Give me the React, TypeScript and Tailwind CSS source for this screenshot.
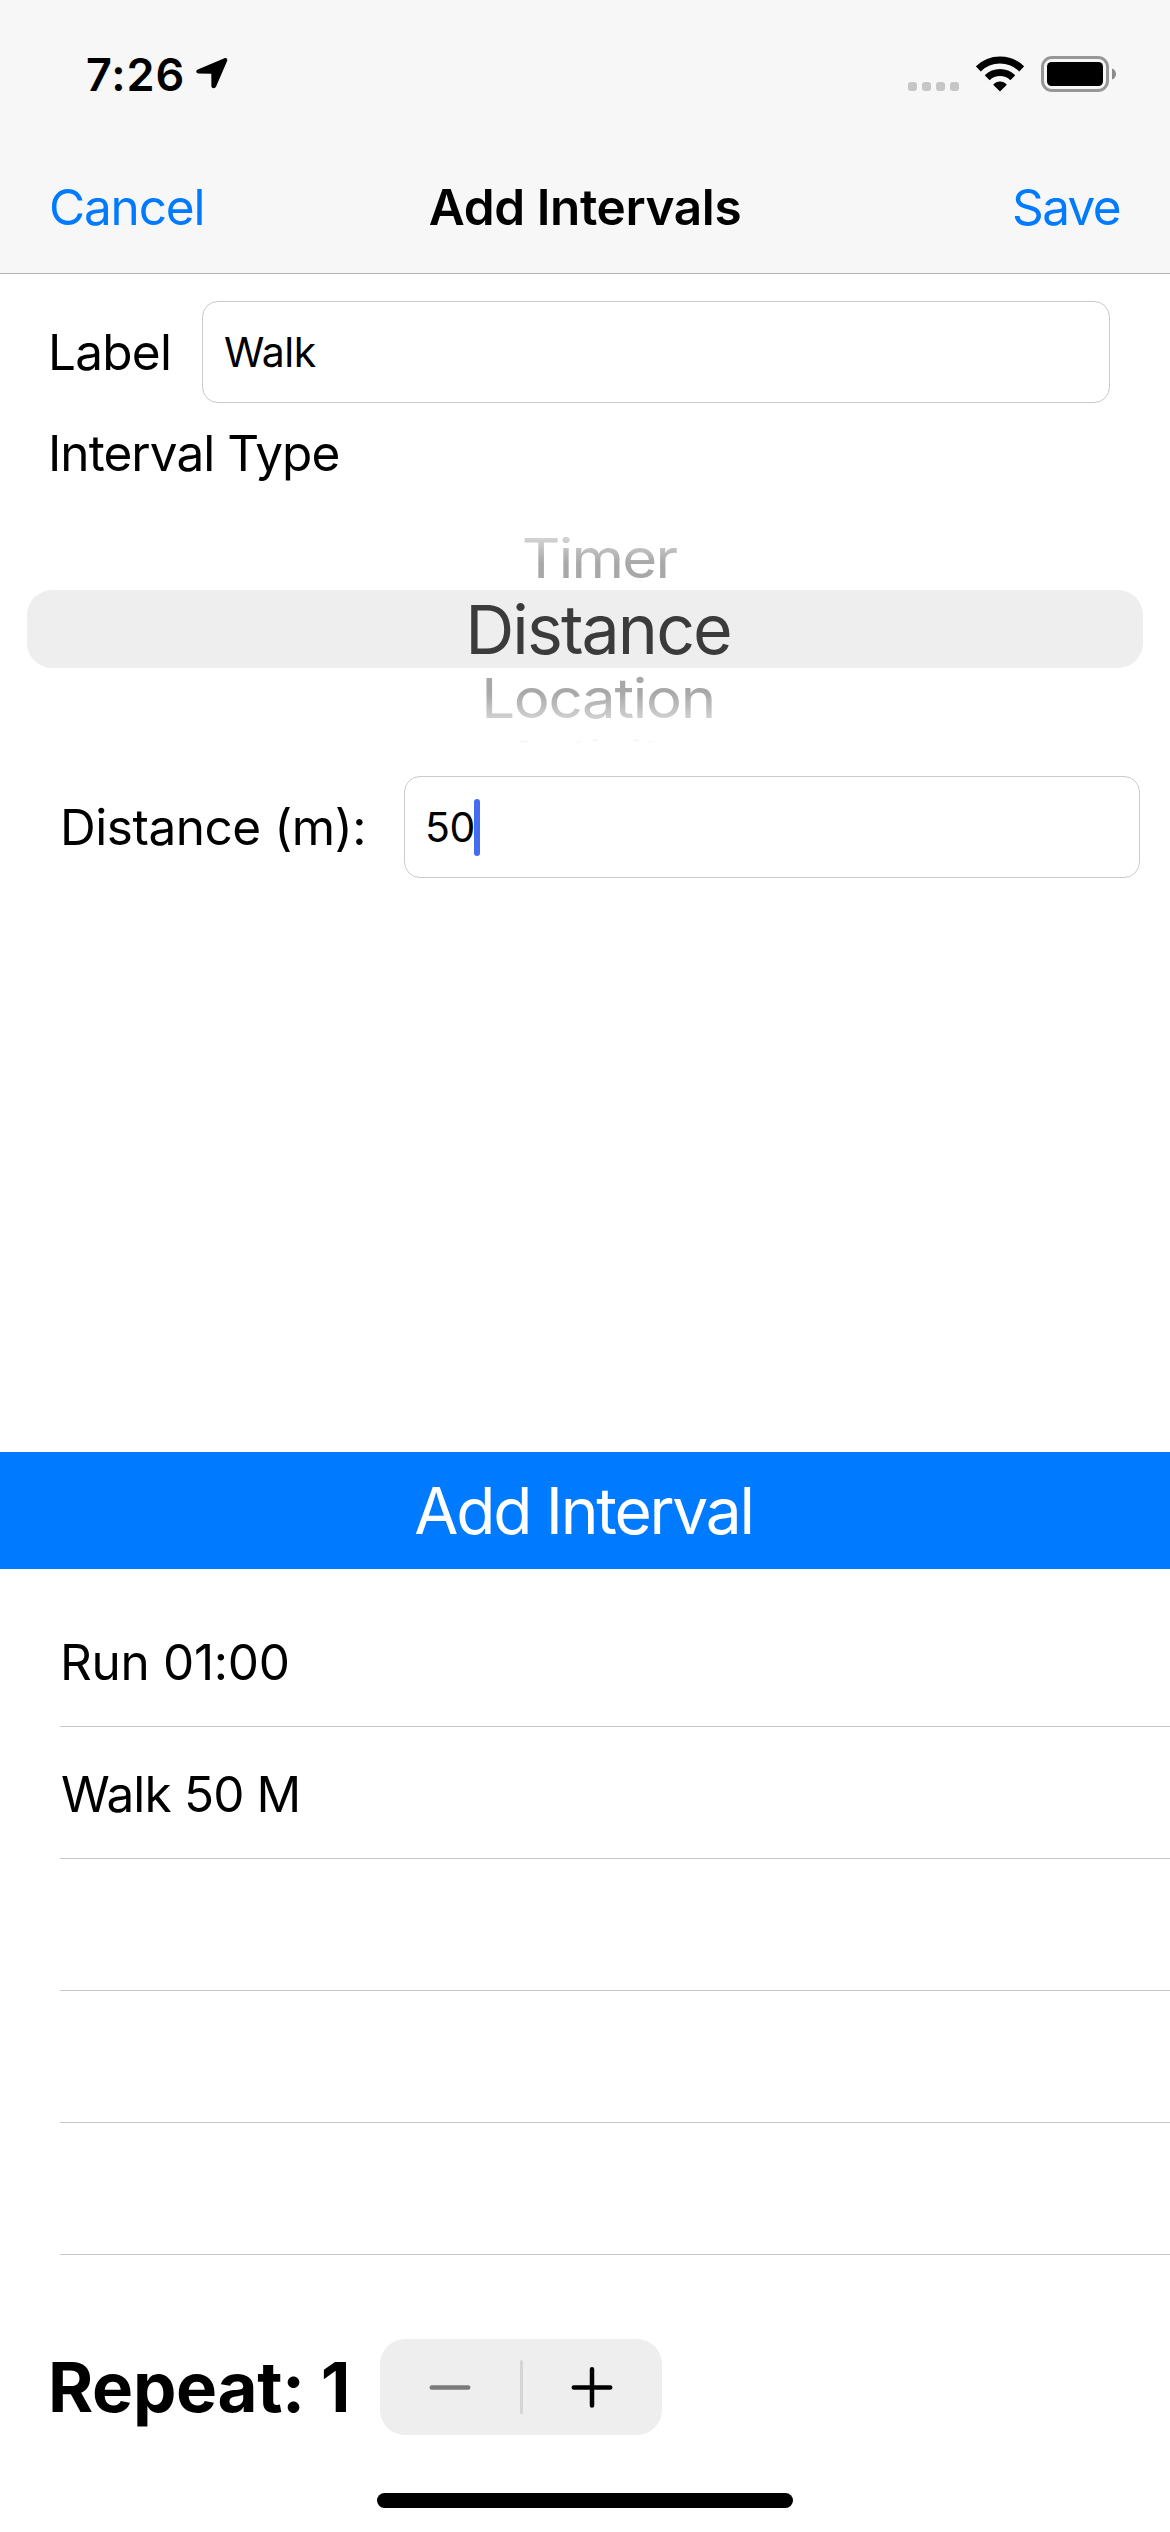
import type { ReactNode } from "react";

function LocationArrow() {
  return (
    <svg className="ml-[11px] h-8 w-8 -translate-y-px" viewBox="0 0 32 32" fill="#000">
      <path d="M1.8 12.4 28.4 1.3C30.4.6 31.8 1.9 31.1 3.9L20 29.8c-.9 2-4.6 1.700-4.600-.6L15.300 16.700 2.600 16.500C-.2 16.400-.5 13.500 1.800 12.400Z" />
    </svg>
  );
}

function SignalDots() {
  return (
    <div className="flex gap-[5px] pt-[25px]">
      {[0, 1, 2, 3].map((i) => (
        <span key={i} className="h-[9px] w-[9px] rounded-[3px] bg-[#c6c6c6]" />
      ))}
    </div>
  );
}

function WifiIcon() {
  return (
    <svg className="ml-[17px] h-9 w-12" viewBox="0 0 48 36" fill="none" stroke="#000">
      <path d="M2.300 12.900A31 31 0 0 1 45.700 12.900" strokeWidth="7" />
      <path d="M11.200 21.800A18.400 18.400 0 0 1 36.800 21.800" strokeWidth="7" />
      <path d="M17.200 28.700C20.900 24.500 27.100 24.500 30.800 28.700L24 35.600Z" fill="#000" stroke="none" />
    </svg>
  );
}

function BatteryIcon() {
  return (
    <svg className="ml-[17px] h-9 w-[75px]" viewBox="0 0 75 36">
      <rect x="1.500" y="1.500" width="65" height="33" rx="9.500" fill="none" stroke="#979797" strokeWidth="3" />
      <rect x="6" y="6" width="56" height="24" rx="4.500" fill="#000" />
      <path d="M71 12.500C76.300 14 76.300 22 71 23.500Z" fill="#8c8c8c" />
    </svg>
  );
}

function Field({ className, children }: { className: string; children: ReactNode }) {
  return (
    <div className={`flex h-[102px] items-center rounded-[16px] border border-[#cbcbcb] bg-white text-[41px] ${className}`}>
      {children}
    </div>
  );
}

const intervals = ["Run 01:00", "Walk 50 M", "", "", ""];

export default function App() {
  return (
    <div className="flex h-[2532px] w-[1170px] flex-col overflow-hidden whitespace-nowrap bg-white font-['Inter',sans-serif] text-[49.5px] leading-none text-black">
      <header className="h-[274px] border-b border-[#b2b2b2] bg-[#f7f7f7]">
        <div className="flex h-[148px] items-center pl-[86px] pr-[54px]">
          <span className="text-[45px] font-semibold tracking-[0.9px]">7:26</span>
          <LocationArrow />
          <div className="ml-auto flex items-center">
            <SignalDots />
            <WifiIcon />
            <BatteryIcon />
          </div>
        </div>
        <nav className="grid h-[118px] grid-cols-[1fr_auto_1fr] items-center pl-[49px] pr-[50px] pt-[2px]">
          <button className="justify-self-start tracking-[-1.17px] text-[#007aff]">Cancel</button>
          <h1 className="pl-px font-semibold tracking-[-0.38px]">Add Intervals</h1>
          <button className="justify-self-end tracking-[-1.66px] text-[#007aff]">Save</button>
        </nav>
      </header>

      <div className="mt-[27px] flex items-center pl-12">
        <label className="w-[154px] pt-px tracking-[-0.74px]">Label</label>
        <Field className="w-[908px] pl-[21px] tracking-[-0.52px]">Walk</Field>
      </div>
      <div className="flex h-[100px] items-center pl-12 pt-px tracking-[-0.95px]">Interval Type</div>

      <div className="flex h-[240px] flex-col overflow-hidden px-[27px] pt-[23px] text-center text-[60px] text-[#a8a8a8] [mask-image:linear-gradient(to_bottom,transparent_12px,rgba(0,0,0,0.5)_35px,#000_60px,#000_190px,rgba(0,0,0,0.5)_217px,rgba(0,0,0,0.12)_230px,rgba(0,0,0,0.05)_240px)]">
        <div className="h-16 shrink-0 scale-y-[0.92] pl-[28px] leading-[64px] tracking-[-1.8px]">Timer</div>
        <div className="h-[78px] shrink-0 rounded-[25px] bg-[#eeeeee] pl-[26px] text-[68px] leading-[78px] tracking-[-1.89px] text-[#3b3b3b]">
          Distance
        </div>
        <div className="h-[60px] shrink-0 scale-y-[0.92] pl-[26px] leading-[60px] tracking-[-1.3px]">Location</div>
        <div className="mt-px h-11 shrink-0 scale-x-[0.92] scale-y-50 pl-[26px] leading-[44px] tracking-[-1.5px]">Activity</div>
      </div>

      <div className="mt-[33px] flex items-center pl-[60px]">
        <label className="w-[344px] pt-[2px] tracking-[-0.46px]">Distance (m):</label>
        <Field className="w-[736px] pl-[20px] tracking-[-0.42px]">
          50
          <span className="-ml-px h-[57px] w-[6px] rounded-full bg-[#446cf0]" />
        </Field>
      </div>

      <button className="mt-[574px] h-[117px] shrink-0 bg-[#007aff] pr-[3px] text-[64px] tracking-[-2.25px] text-white">
        Add Interval
      </button>

      <ul className="mt-[26px] pl-[60px]">
        {intervals.map((text, i) => (
          <li
            key={i}
            className={`flex h-[132px] items-center border-b border-[#c6c6c8] pt-[4px] ${i === 0 ? "tracking-[-0.3px]" : "pl-px tracking-[-0.85px]"}`}
          >
            {text}
          </li>
        ))}
      </ul>

      <footer className="mt-[84px] flex items-center pl-12">
        <span className="w-[332px] text-[69px] font-bold tracking-[-0.35px]">Repeat: 1</span>
        <div className="flex h-24 w-[282px] items-center rounded-[25px] bg-[#eeeeee]">
          <button className="flex flex-1 justify-center">
            <svg className="h-[42px] w-[42px]" viewBox="0 0 42 42" stroke="#7b7b7b" strokeWidth="4.500" strokeLinecap="round">
              <path d="M2.800 21.500H39.200" />
            </svg>
          </button>
          <span className="h-[54px] w-[3px] rounded-full bg-[#d5d5d6]" />
          <button className="flex flex-1 justify-center">
            <svg className="h-[42px] w-[42px]" viewBox="0 0 42 42" stroke="#000" strokeWidth="4.500" strokeLinecap="round">
              <path d="M2.800 21.500H39.200M21 3.200V39.600" />
            </svg>
          </button>
        </div>
      </footer>
      <div className="mx-auto mt-[58px] h-[15px] w-[416px] shrink-0 rounded-full bg-black" />
    </div>
  );
}
